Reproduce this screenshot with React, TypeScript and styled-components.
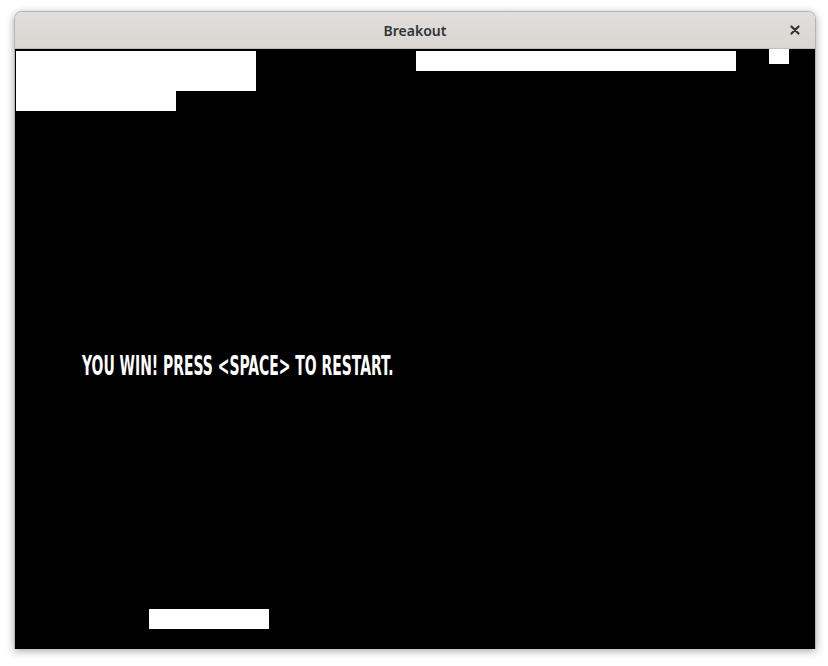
import React from 'react';
import styled, { createGlobalStyle } from 'styled-components';

const GlobalStyle = createGlobalStyle`
  html, body {
    margin: 0;
    padding: 0;
    background: #ffffff;
  }
`;

type Rect = { x: number; y: number; w: number; h: number };

// game objects drawn on the playfield, in canvas pixels
const bricks: Rect[] = [
  { x: 1, y: 2, w: 240, h: 40 },
  { x: 1, y: 42, w: 160, h: 20 },
  { x: 401, y: 2, w: 320, h: 20 },
];
const ball: Rect = { x: 754, y: 0, w: 20, h: 15 };
const paddle: Rect = { x: 134, y: 560, w: 120, h: 20 };

const place = (r: Rect) => ({ left: r.x, top: r.y, width: r.w, height: r.h });

export default function App() {
  return (
    <Page>
      <GlobalStyle />
      <Window>
        <TitleBar>
          <Title>Breakout</Title>
          <CloseButton aria-label="Close">
            <svg width="10" height="10" viewBox="0 0 10 10">
              <path d="M1.5 1.5 L8.5 8.5 M8.5 1.5 L1.5 8.5" stroke="#2e3436" strokeWidth="2.2" strokeLinecap="round" />
            </svg>
          </CloseButton>
        </TitleBar>
        <Canvas>
          {bricks.map((b, i) => (
            <Block key={i} style={place(b)} />
          ))}
          <Block style={place(ball)} />
          <Block style={place(paddle)} />
          <Message>YOU WIN! PRESS &lt;SPACE&gt; TO RESTART.</Message>
        </Canvas>
      </Window>
    </Page>
  );
}

const Page = styled.div`
  padding: 11px 0 0 14px;
  min-height: 666px;
  box-sizing: border-box;
`;

const Window = styled.div`
  width: 800px;
  border: 1px solid #b8b4b0;
  border-bottom: none;
  border-radius: 8px 8px 0 0;
  box-shadow: 0 2px 8px rgba(0, 0, 0, 0.35);
  overflow: hidden;
`;

const TitleBar = styled.div`
  display: grid;
  grid-template-columns: 1fr auto 1fr;
  align-items: center;
  height: 36px;
  padding: 0 15px;
  background: linear-gradient(#e1dedb, #dad6d2);
  border-bottom: 1px solid #c2bcb6;
`;

const Title = styled.span`
  grid-column: 2;
  font-family: 'Noto Sans', 'DejaVu Sans', sans-serif;
  font-weight: 600;
  font-size: 14px;
  color: #2e3436;
  margin-top: 1px;
`;

const CloseButton = styled.div`
  grid-column: 3;
  justify-self: end;
  width: 10px;
  height: 10px;
  display: flex;
`;

const Canvas = styled.div`
  position: relative;
  width: 800px;
  height: 600px;
  background: #000000;
  overflow: hidden;
`;

const Block = styled.div`
  position: absolute;
  background: #ffffff;
`;

const Message = styled.div`
  position: absolute;
  left: 67px;
  top: 303px;
  font-family: 'DejaVu Sans Condensed', 'DejaVu Sans', sans-serif;
  font-weight: bold;
  font-size: 27px;
  line-height: 1;
  color: #ffffff;
  white-space: nowrap;
  transform: scaleX(0.574);
  transform-origin: left top;
`;
